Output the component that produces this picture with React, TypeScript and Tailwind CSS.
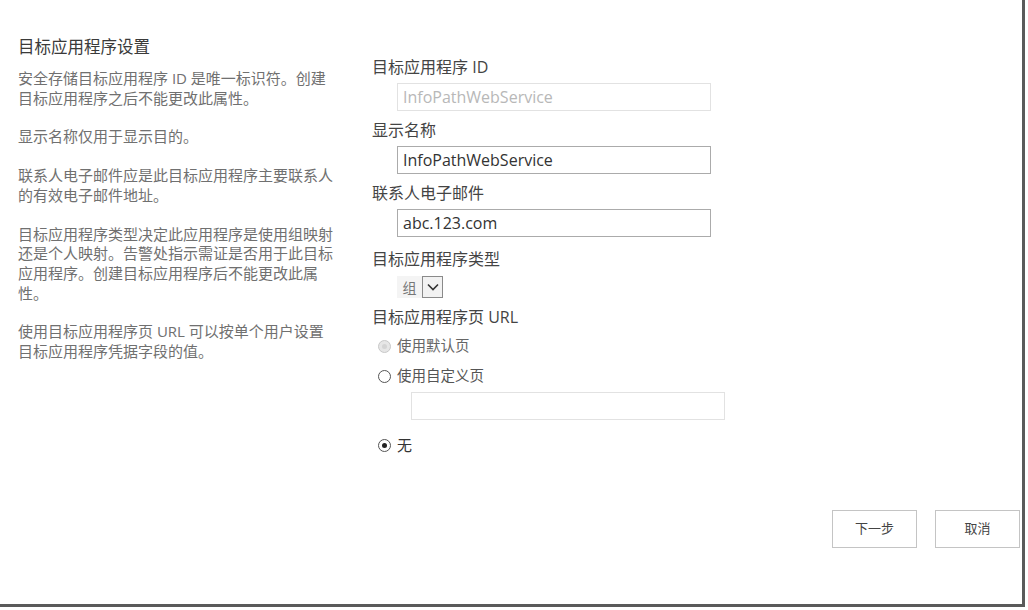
import React from "react";

const FONT = { fontFamily: '"Open Sans", "Noto Sans CJK SC", sans-serif' };

// Help paragraphs, broken into lines the way the reference wraps them
const helpText = [
  ["安全存储目标应用程序 ID 是唯一标识符。创建", "目标应用程序之后不能更改此属性。"],
  ["显示名称仅用于显示目的。"],
  ["联系人电子邮件应是此目标应用程序主要联系人", "的有效电子邮件地址。"],
  [
    "目标应用程序类型决定此应用程序是使用组映射",
    "还是个人映射。告警处指示需证是否用于此目标",
    "应用程序。创建目标应用程序后不能更改此属",
    "性。",
  ],
  ["使用目标应用程序页 URL 可以按单个用户设置", "目标应用程序凭据字段的值。"],
];

// Radio circle: disabled / empty / checked
const Radio = ({ state }: { state: "disabled" | "off" | "on" }) => (
  <span
    className={
      "flex h-[13px] w-[13px] items-center justify-center rounded-full border " +
      (state === "disabled" ? "border-[#c8c8c8] bg-[#e6e6e6]" : "border-[#555] bg-white")
    }
  >
    {state === "on" && <span className="h-[5px] w-[5px] rounded-full bg-[#222]" />}
    {state === "disabled" && <span className="h-[5px] w-[5px] rounded-full bg-[#d4d4d4]" />}
  </span>
);

const Label = ({ children, className = "" }: { children: React.ReactNode; className?: string }) => (
  <div className={"h-6 text-[16px] leading-6 text-[#444] " + className}>{children}</div>
);

const Field = ({ value, disabled }: { value: string; disabled?: boolean }) => (
  <div
    className={
      "ml-[25px] mt-1 flex h-[28px] w-[314px] items-center border px-[5px] text-[16px] " +
      (disabled ? "border-[#e2e2e2] text-[#b8b8b8]" : "border-[#ababab] text-[#333]")
    }
  >
    {value}
  </div>
);

export default function App() {
  return (
    <div className="h-[610px] w-[1028px] bg-white" style={FONT}>
      <div className="flex h-[607px] w-[1025px] flex-col border-b-[3px] border-r-[3px] border-[#5a5a5a] bg-white">
        <div className="flex pl-[18px] pt-[35px]">
          {/* Left description column */}
          <div className="w-[354px]">
            <div className="h-6 text-[16.5px] leading-6 text-[#3a3a3a]">目标应用程序设置</div>
            <div className="mt-[10px] w-[330px]">
              {helpText.map((lines, i) => (
                <p key={i} className="mb-[19px] whitespace-nowrap text-[15px] leading-[19.7px] text-[#707070]">
                  {lines.map((l, j) => (
                    <span key={j} className="block">
                      {l}
                    </span>
                  ))}
                </p>
              ))}
            </div>
          </div>

          {/* Right form column */}
          <div className="flex flex-col pt-[20px]">
            <Label>目标应用程序 ID</Label>
            <Field value="InfoPathWebService" disabled />

            <Label className="mt-[7px]">显示名称</Label>
            <Field value="InfoPathWebService" />

            <Label className="mt-[7px]">联系人电子邮件</Label>
            <Field value="abc.123.com" />

            <Label className="mt-[10px]">目标应用程序类型</Label>
            <div className="ml-[25px] mt-[5px] flex h-[22px] items-stretch">
              <span className="flex w-[25px] items-center justify-center bg-[#f4f4f4] text-[14px] text-[#777]">组</span>
              <span className="flex w-[21px] items-center justify-center border border-[#8a8a8a] bg-[#f2f2f2]">
                <svg width="12" height="8" viewBox="0 0 12 8" fill="none">
                  <path d="M1 1.5 L6 6.5 L11 1.5" stroke="#333" strokeWidth="1.6" />
                </svg>
              </span>
            </div>

            <Label className="mt-[7px]">目标应用程序页 URL</Label>
            <div className="mt-[2px] flex h-[30px] items-center gap-[6px] pl-[6px] text-[14.5px] text-[#666]">
              <Radio state="disabled" />
              <span>使用默认页</span>
            </div>
            <div className="flex h-[30px] items-center gap-[6px] pl-[6px] text-[14.5px] text-[#555]">
              <Radio state="off" />
              <span>使用自定义页</span>
            </div>
            <div className="ml-[39px] mt-px h-[28px] w-[314px] border border-[#e2e2e2]" />
            <div className="mt-[15px] flex h-5 items-center gap-[6px] pl-[6px] text-[15px] text-[#333]">
              <Radio state="on" />
              <span>无</span>
            </div>
          </div>
        </div>

        {/* Buttons */}
        <div className="mt-[55px] flex justify-end gap-[18px] pr-[2px]">
          <button className="h-[38px] w-[85px] border border-[#c4c4c4] bg-white text-[13px] text-[#444]">下一步</button>
          <button className="h-[38px] w-[85px] border border-[#c4c4c4] bg-white text-[13px] text-[#444]">取消</button>
        </div>
      </div>
    </div>
  );
}
